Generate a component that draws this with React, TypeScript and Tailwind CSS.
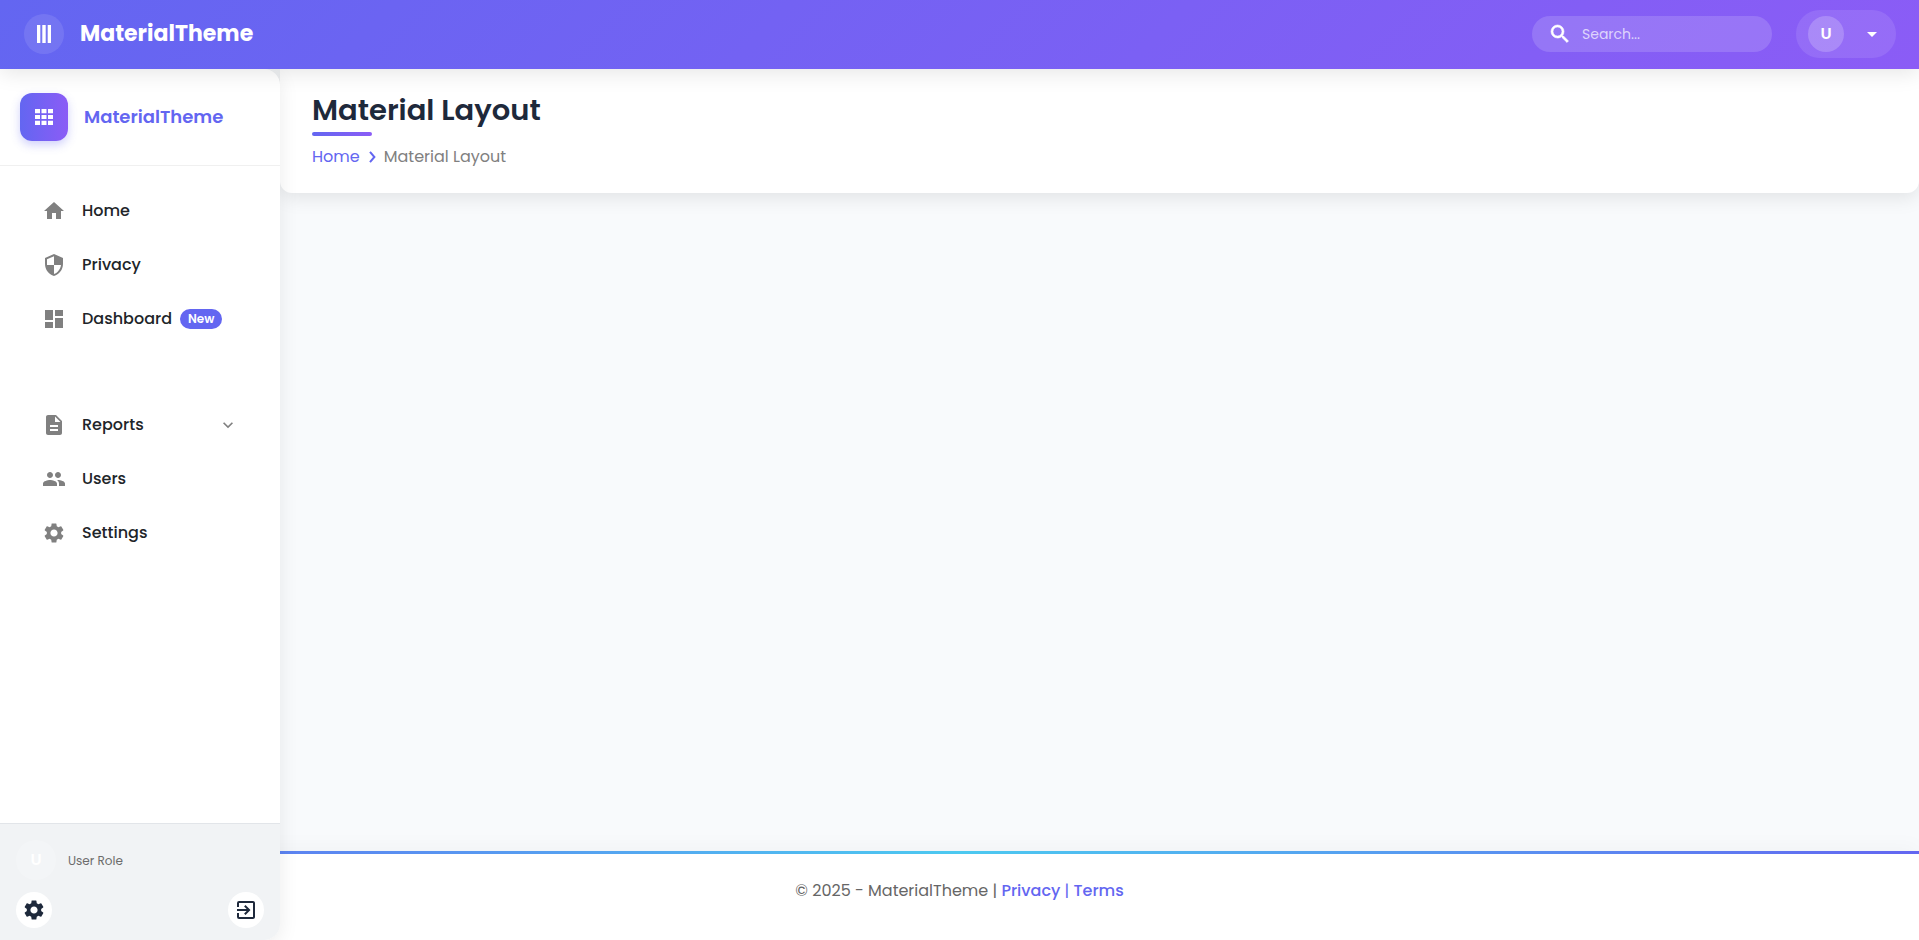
import React from "react";
import type { IconType } from "react-icons";
import {
  MdHome,
  MdSecurity,
  MdDashboard,
  MdDescription,
  MdPeople,
  MdSettings,
  MdArrowDropDown,
  MdExitToApp,
  MdExpandMore,
} from "react-icons/md";

type NavItem = { label: string; icon: IconType; badge?: string; expandable?: boolean };

const primaryNav: NavItem[] = [
  { label: "Home", icon: MdHome },
  { label: "Privacy", icon: MdSecurity },
  { label: "Dashboard", icon: MdDashboard, badge: "New" },
];

const secondaryNav: NavItem[] = [
  { label: "Reports", icon: MdDescription, expandable: true },
  { label: "Users", icon: MdPeople },
  { label: "Settings", icon: MdSettings },
];

function BarsIcon() {
  return (
    <svg width="14" height="18" viewBox="0 0 14 18" fill="currentColor" aria-hidden="true">
      <path d="M0 0h3.3v18H0zM5.3 0h3.4v18H5.3zM10.7 0H14v18h-3.3z" />
    </svg>
  );
}

function SearchIcon() {
  return (
    <svg
      className="shrink-0"
      width="24"
      height="24"
      viewBox="0 0 24 24"
      fill="currentColor"
      stroke="currentColor"
      strokeWidth="0.6"
      aria-hidden="true"
    >
      <path d="M15.5 14h-.79l-.28-.27A6.471 6.471 0 0 0 16 9.5 6.5 6.5 0 1 0 9.5 16c1.61 0 3.09-.59 4.23-1.57l.27.28v.79l5 4.99L20.49 19l-4.99-5zm-6 0C7.01 14 5 11.99 5 9.5S7.01 5 9.5 5 14 7.01 14 9.5 11.99 14 9.5 14z" />
    </svg>
  );
}

function GridIcon() {
  return (
    <svg width="18" height="16" viewBox="0 0 18 16" fill="currentColor" aria-hidden="true">
      <path d="M0 0h5v4.2H0zM6.5 0h5v4.2h-5zM13 0h5v4.2h-5zM0 5.9h5v4.2H0zM6.5 5.9h5v4.2h-5zM13 5.9h5v4.2h-5zM0 11.8h5V16H0zM6.5 11.8h5V16h-5zM13 11.8h5V16h-5z" />
    </svg>
  );
}

function NavGroup({ items }: { items: NavItem[] }) {
  return (
    <ul className="flex flex-col gap-2">
      {items.map(({ label, icon: Icon, badge, expandable }) => (
        <li key={label}>
          <a href="#" className="flex h-[46px] items-center px-4 font-medium text-[#212529]">
            <Icon className="size-6 shrink-0 text-[#808080]" />
            <span className="ml-4">{label}</span>
            {badge && (
              <span className="ml-2 rounded-full bg-[#6366f1] px-2 text-xs leading-5 font-semibold text-white">
                {badge}
              </span>
            )}
            {expandable && <MdExpandMore className="ml-auto size-5 text-[#808080]" />}
          </a>
        </li>
      ))}
    </ul>
  );
}

export default function App() {
  return (
    <div className="flex min-h-screen flex-col bg-[#f8fafc] font-['Poppins','Inter',sans-serif] text-base text-[#212529]">
      <header className="relative z-20 flex h-[69px] items-center bg-linear-135/srgb from-[#6366f1] to-[#8b5cf6] pr-[23px] pb-[2px] pl-6 text-white shadow-[0_4px_20px_rgba(0,0,0,0.1)]">
        <button
          aria-label="Toggle menu"
          className="flex size-10 items-center justify-center rounded-full bg-white/10"
        >
          <BarsIcon />
        </button>
        <a href="#" className="ml-4 text-[22px] leading-8 font-bold">
          MaterialTheme
        </a>
        <label className="ml-auto flex h-9 w-60 items-center rounded-full bg-white/15 px-4">
          <SearchIcon />
          <input
            type="text"
            aria-label="Search"
            placeholder="Search..."
            className="ml-[10px] min-w-0 flex-1 bg-transparent text-sm outline-none placeholder:text-white/70"
          />
        </label>
        <button
          aria-label="User menu"
          className="ml-6 flex h-12 w-[100px] items-center justify-between rounded-full bg-white/10 px-3"
        >
          <span className="flex size-9 items-center justify-center rounded-full bg-white/20 font-semibold">
            U
          </span>
          <MdArrowDropDown className="size-6" />
        </button>
      </header>

      <div className="grid flex-1 grid-cols-[280px_minmax(0,1fr)] grid-rows-[minmax(0,1fr)_auto]">
        <aside className="relative z-10 col-start-1 row-span-2 row-start-1 flex flex-col overflow-hidden rounded-r-2xl bg-white shadow-[0_4px_20px_rgba(0,0,0,0.08)]">
          <div className="flex h-[97px] items-center border-b border-[#f0f0f0] px-5">
            <span className="flex size-12 items-center justify-center rounded-xl bg-linear-to-r/srgb from-[#6366f1] to-[#8b5cf6] text-white shadow-[0_4px_10px_rgba(99,102,241,0.3)]">
              <GridIcon />
            </span>
            <span className="ml-4 text-lg font-semibold text-[#6366f1]">MaterialTheme</span>
          </div>
          <nav className="flex flex-1 flex-col gap-[60px] px-[26px] pt-[22px]">
            <NavGroup items={primaryNav} />
            <NavGroup items={secondaryNav} />
          </nav>
          <div className="flex flex-col gap-3 border-t border-[#e2e5e9] bg-[#f1f3f5] px-4 pt-4 pb-3">
            <div className="flex items-center gap-3">
              <span className="flex size-10 items-center justify-center rounded-full bg-white/20 font-semibold text-white">
                U
              </span>
              <span className="pt-[2px] text-xs text-[#6c6c6c]">User Role</span>
            </div>
            <div className="flex justify-between text-[#1e293b]">
              <button
                aria-label="Settings"
                className="flex size-9 items-center justify-center rounded-full bg-white"
              >
                <MdSettings className="size-6" />
              </button>
              <button
                aria-label="Sign out"
                className="flex size-9 items-center justify-center rounded-full bg-white"
              >
                <MdExitToApp className="size-6" />
              </button>
            </div>
          </div>
        </aside>

        <main className="col-start-2 row-start-1">
          <div className="flex h-[124px] flex-col items-start rounded-b-xl bg-white px-8 pt-[21px] shadow-[0_4px_20px_rgba(0,0,0,0.1)]">
            <h1 className="text-[29px] leading-10 font-semibold text-[#1e293b]">Material Layout</h1>
            <span className="mt-[2px] h-1 w-[60px] rounded-full bg-linear-to-r/srgb from-[#6366f1] to-[#8b5cf6]" />
            <nav aria-label="Breadcrumb" className="mt-[9px] flex items-center gap-2 leading-6">
              <a href="#" className="text-[#6366f1]">
                Home
              </a>
              <svg
                className="text-[#6366f1]"
                width="8"
                height="12"
                viewBox="0 0 8 12"
                fill="none"
                stroke="currentColor"
                strokeWidth="2"
                aria-hidden="true"
              >
                <path d="M2 .8L6.4 6 2 11.2" />
              </svg>
              <span className="text-[#808080]">Material Layout</span>
            </nav>
          </div>
        </main>

        <footer className="col-span-2 col-start-1 row-start-2 bg-white text-center leading-6 text-[#666666] shadow-[0_-4px_20px_rgba(0,0,0,0.03)]">
          <div className="h-[3px] bg-linear-to-r/srgb from-[#6366f1] via-[#4cc9f0] to-[#6366f1]" />
          <p className="h-[86px] pt-[25px]">
            © 2025 - MaterialTheme |{" "}
            <span className="text-[#6366f1]">
              <a href="#" className="font-medium">
                Privacy
              </a>{" "}
              |{" "}
              <a href="#" className="font-medium">
                Terms
              </a>
            </span>
          </p>
        </footer>
      </div>
    </div>
  );
}
